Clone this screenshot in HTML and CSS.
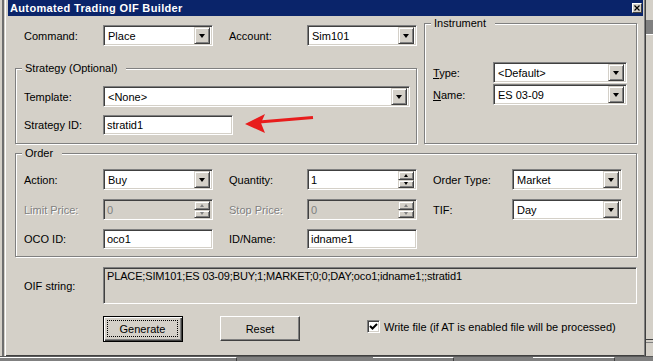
FILE: index.html
```html
<!DOCTYPE html>
<html>
<head>
<meta charset="utf-8">
<link rel="stylesheet" href="styles.css">
</head>
<body>
<div class="screen">
  <div class="gutter-l"></div>
  <div class="window">
    <div class="titlebar">
      <span class="title">Automated Trading OIF Builder</span>
      <span class="close"><svg width="6" height="6" viewBox="0 0 6 6"><path d="M0.5 0.5 L5.5 5.5 M5.5 0.5 L0.5 5.5" stroke="#000" stroke-width="1.2"/></svg></span>
    </div>
    <div class="client">
      <div class="top">
        <div class="leftcol">
          <div class="row cmdrow">
            <span class="lbl">Command:</span>
            <div class="combo w110"><span class="val">Place</span><span class="dd"><i></i></span></div>
            <span class="lbl lbl2">Account:</span>
            <div class="combo w110"><span class="val">Sim101</span><span class="dd"><i></i></span></div>
          </div>
          <fieldset class="group strat">
            <legend>Strategy (Optional)</legend>
            <div class="row">
              <span class="lbl">Template:</span>
              <div class="combo w307"><span class="val">&lt;None&gt;</span><span class="dd"><i></i></span></div>
            </div>
            <div class="row r2">
              <span class="lbl">Strategy ID:</span>
              <div class="edit w130"><span class="val">stratid1</span></div>
            </div>
          </fieldset>
        </div>
        <fieldset class="group instr">
          <legend>Instrument</legend>
          <div class="row">
            <span class="lbl ilbl"><u>T</u>ype:</span>
            <div class="combo w134"><span class="val">&lt;Default&gt;</span><span class="dd"><i></i></span></div>
          </div>
          <div class="row r1">
            <span class="lbl ilbl"><u>N</u>ame:</span>
            <div class="combo w134"><span class="val">ES 03-09</span><span class="dd"><i></i></span></div>
          </div>
        </fieldset>
      </div>

      <fieldset class="group order">
        <legend>Order</legend>
        <div class="ogrid">
          <span class="lbl">Action:</span>
          <div class="combo w110"><span class="val">Buy</span><span class="dd"><i></i></span></div>
          <span class="lbl">Quantity:</span>
          <div class="edit spin w110"><span class="val">1</span><span class="sbs"><span class="sb"><b class="up"></b></span><span class="sb"><b class="dn"></b></span></span></div>
          <span class="lbl">Order Type:</span>
          <div class="combo w110"><span class="val">Market</span><span class="dd"><i></i></span></div>

          <span class="lbl dis">Limit Price:</span>
          <div class="edit spin w110 disabled"><span class="val">0</span><span class="sbs"><span class="sb"><b class="up"></b></span><span class="sb"><b class="dn"></b></span></span></div>
          <span class="lbl dis">Stop Price:</span>
          <div class="edit spin w110 disabled"><span class="val">0</span><span class="sbs"><span class="sb"><b class="up"></b></span><span class="sb"><b class="dn"></b></span></span></div>
          <span class="lbl">TIF:</span>
          <div class="combo w110"><span class="val">Day</span><span class="dd"><i></i></span></div>

          <span class="lbl">OCO ID:</span>
          <div class="edit w110 h20"><span class="val">oco1</span></div>
          <span class="lbl">ID/Name:</span>
          <div class="edit w110 h20"><span class="val">idname1</span></div>
          <span></span>
          <span></span>
        </div>
      </fieldset>

      <div class="row oifrow">
        <span class="lbl">OIF string:</span>
        <div class="oifbox">PLACE;SIM101;ES 03-09;BUY;1;MARKET;0;0;DAY;oco1;idname1;;stratid1</div>
      </div>

      <div class="btnrow">
        <div class="btn default"><span class="focus">Generate</span></div>
        <div class="btn reset">Reset</div>
        <div class="chk">
          <span class="box"><svg width="9" height="9" viewBox="0 0 9 9"><path d="M1 4 L3.5 6.5 L8 2" fill="none" stroke="#000" stroke-width="2"/></svg></span>
          <span class="chktext">Write file (if AT is enabled file will be processed)</span>
        </div>
      </div>
    </div>
  </div>
  <div class="gutter-r">
    <div class="gr-block"></div>
    <div class="gr-lines"></div>
  </div>
</div>
<div class="bottom">
  <span class="seg s1"></span><span class="seg s2"></span><span class="seg s3"></span>
</div>

<svg class="arrow" width="653" height="361" viewBox="0 0 653 361">
  <path d="M259 122 L313 117.5" stroke="#e81c1c" stroke-width="3" fill="none"/>
  <path d="M245 124 L265 114 L261 123 L265 133 Z" fill="#e81c1c"/>
</svg>
</body>
</html>
```

FILE: styles.css
```css
* { box-sizing: border-box; }
html, body { margin: 0; padding: 0; }
body {
  width: 653px;
  height: 361px;
  overflow: hidden;
  position: relative;
  background: #808080;
  font-family: "Liberation Sans", Arial, sans-serif;
  font-size: 11px;
  color: #000;
}

.screen { display: flex; height: 356px; }

.gutter-l {
  width: 6px;
  background: linear-gradient(to right, #d4d0c8 0 2px, #6e6e6e 2px 4px, #d4d0c8 4px 5px, #ffffff 5px 6px);
}

.window {
  width: 639px;
  background: #d4d0c8;
  display: flex;
  flex-direction: column;
  border-right: 1px solid #808080;
  border-bottom: 1px solid #404040;
  box-shadow: 1px 0 0 #404040;
}

.gutter-r {
  width: 7px;
  margin-left: 1px;
  background: #d4d0c8;
  display: flex;
  flex-direction: column;
}
.gr-block {
  margin-top: 20px;
  height: 15px;
  background: #808080;
  border-bottom: 1px solid #fff;
}
.gr-lines {
  margin-top: 304px;
  height: 4px;
  border-top: 1px solid #404040;
  border-bottom: 1px solid #808080;
}

.bottom {
  height: 5px;
  background: #808080;
  border-top: 1px solid #5a5a5a;
  display: flex;
}
.seg { height: 4px; border-top: 1px solid #fff; border-right: 1px solid #404040; }
.s1 { width: 237px; }
.s2 { width: 81px; margin-left: 136px; }
.s3 { width: 82px; margin-left: 79px; }

/* title bar */
.titlebar {
  height: 16px;
  margin: 0 1px 0 2px;
  padding: 0 1px 0 2px;
  background: #0a246a;
  color: #fff;
  font-weight: bold;
  display: flex;
  align-items: center;
  justify-content: space-between;
}
.title { letter-spacing: 0.35px; }
.close {
  width: 10px;
  height: 10px;
  background: #d4d0c8;
  border: 1px solid;
  border-color: #fff #404040 #404040 #fff;
  display: flex;
  align-items: center;
  justify-content: center;
}
.close svg { display: block; }

/* client */
.client {
  flex: 1;
  padding: 1px 7px 0 9px;
}

.top { display: flex; gap: 7px; }
.leftcol { width: 402px; display: flex; flex-direction: column; }

.row { display: flex; align-items: center; }
.cmdrow { margin-top: 8px; padding-left: 9px; }
.lbl { width: 79px; white-space: nowrap; }
.lbl2 { width: 78px; margin-left: 16px; }
.ilbl { width: 60px; }
.dis { color: #808080; text-shadow: 1px 1px 0 #fff; }

/* group boxes */
fieldset.group {
  margin: 0;
  padding: 0 0 0 8px;
  border: 1px solid #808080;
  box-shadow: inset 1px 1px 0 #fff, 1px 1px 0 #fff;
  min-width: 0;
}
fieldset.group legend {
  padding: 0 9px 0 3px;
  margin-left: -2px;
  line-height: 12px;
  background: #d4d0c8;
}
fieldset.group.strat { margin-top: 16px; padding-top: 12px; padding-bottom: 8px; }
.strat .r2 { margin-top: 8px; }
fieldset.group.instr { flex: 1; padding-top: 33px; }
.instr .r1 { margin-top: 1px; }
fieldset.group.order { margin-top: 3px; padding-top: 10px; padding-bottom: 7px; }

.ogrid {
  display: grid;
  grid-template-columns: 79px 110px 94px 110px 95px 110px;
  grid-template-rows: 21px 21px 20px;
  row-gap: 9px;
  align-items: center;
}
.ogrid > .lbl { width: auto; }
.ogrid > :nth-child(6n+3),
.ogrid > :nth-child(6n+5) { padding-left: 16px; }

/* controls */
.combo, .edit {
  height: 21px;
  background: #fff;
  border: 1px solid;
  border-color: #808080 #fff #fff #808080;
  box-shadow: inset 1px 1px 0 #404040, inset -1px -1px 0 #d4d0c8;
  padding: 2px;
  display: flex;
  align-items: center;
  flex: none;
}
.edit { height: 20px; }
.spin { height: 21px; }
.h20 { height: 20px; }
.w110 { width: 110px; }
.w130 { width: 130px; }
.w134 { width: 134px; }
.w307 { width: 307px; }

.val { flex: 1; padding-left: 2px; white-space: nowrap; overflow: hidden; }
.edit .val { padding-left: 1px; }

.dd {
  width: 16px;
  height: 17px;
  background: #d4d0c8;
  border: 1px solid;
  border-color: #d4d0c8 #404040 #404040 #d4d0c8;
  box-shadow: inset 1px 1px 0 #fff, inset -1px -1px 0 #808080;
  display: flex;
  align-items: center;
  justify-content: center;
}
.dd i {
  width: 0;
  height: 0;
  border-left: 3.5px solid transparent;
  border-right: 3.5px solid transparent;
  border-top: 4px solid #000;
  margin-top: 1px;
}

.sbs { width: 16px; height: 17px; display: flex; flex-direction: column; }
.sb {
  flex: 1;
  background: #d4d0c8;
  border: 1px solid;
  border-color: #d4d0c8 #404040 #404040 #d4d0c8;
  box-shadow: inset 1px 1px 0 #fff, inset -1px -1px 0 #808080;
  display: flex;
  align-items: center;
  justify-content: center;
}
.sb b { width: 0; height: 0; border-left: 2.5px solid transparent; border-right: 2.5px solid transparent; }
.sb .up { border-bottom: 3px solid #000; }
.sb .dn { border-top: 3px solid #000; }

.disabled { background: #d4d0c8; color: #808080; }
.disabled .sb .up { border-bottom-color: #808080; }
.disabled .sb .dn { border-top-color: #808080; }

/* OIF row */
.oifrow { margin-top: 10px; padding-left: 9px; }
.oifbox {
  flex: 1;
  height: 37px;
  border: 1px solid;
  border-color: #808080 #fff #fff #808080;
  box-shadow: inset 1px 1px 0 #404040, inset -1px -1px 0 #d4d0c8;
  padding: 1px 3px;
  line-height: 14px;
  letter-spacing: -0.15px;
  white-space: nowrap;
}

/* buttons */
.btnrow { display: flex; align-items: flex-start; margin-top: 12px; padding-left: 88px; }
.btn {
  width: 80px;
  height: 25px;
  background: #d4d0c8;
  border: 1px solid;
  border-color: #fff #404040 #404040 #fff;
  box-shadow: inset -1px -1px 0 #808080;
  display: flex;
  align-items: center;
  justify-content: center;
}
.btn.default {
  height: 26px;
  border: 1px solid #000;
  box-shadow: inset 1px 1px 0 #fff, inset -1px -1px 0 #404040, inset -2px -2px 0 #808080;
  padding: 3px 4px 4px 3px;
}
.focus {
  width: 100%;
  height: 100%;
  border: 1px dotted #000;
  display: flex;
  align-items: center;
  justify-content: center;
}
.reset { margin-left: 37px; }

.chk { display: flex; align-items: center; margin-left: 67px; margin-top: 4px; }
.box {
  width: 13px;
  height: 13px;
  background: #fff;
  border: 1px solid;
  border-color: #808080 #fff #fff #808080;
  box-shadow: inset 1px 1px 0 #404040, inset -1px -1px 0 #d4d0c8;
  display: flex;
  align-items: center;
  justify-content: center;
}
.box svg { display: block; }
.chktext { margin-left: 4px; white-space: nowrap; }

.arrow { position: absolute; left: 0; top: 0; pointer-events: none; }
```
